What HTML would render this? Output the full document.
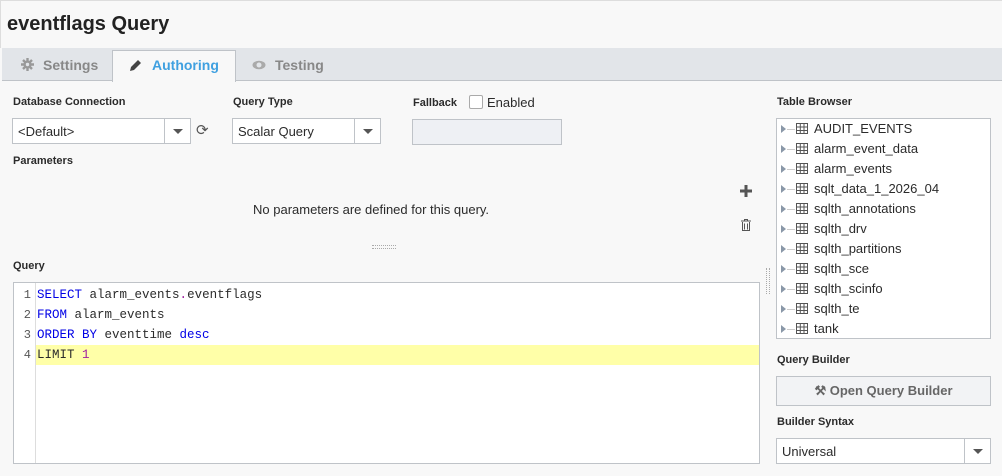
<!DOCTYPE html><html><head><style>
*{box-sizing:border-box;margin:0;padding:0}
body{width:1002px;height:476px;background:#f8f8f8;font-family:"Liberation Sans",sans-serif;color:#2b2b2b;position:relative;overflow:hidden;font-size:13px}
.a{position:absolute}
.lbl{position:absolute;font-size:11px;font-weight:bold;color:#2b2b2b}
.box{position:absolute;background:#fff;border:1px solid #bfc3c8}
.dd{position:absolute;width:26px;top:0;bottom:0;right:0;border-left:1px solid #bfc3c8}
.dd:after{content:"";position:absolute;left:8px;top:10px;border-left:5px solid transparent;border-right:5px solid transparent;border-top:5px solid #555}
.row{position:absolute;left:0;height:20px;font-size:13px;line-height:20px}
.row .tri{position:absolute;left:4px;top:6px;border-top:4px solid transparent;border-bottom:4px solid transparent;border-left:5px solid #8a98a8}
.row .ln{position:absolute;left:10px;top:10px;width:8px;border-top:1px solid #ccc}
.row svg{position:absolute;left:19px;top:4px}
.row span{position:absolute;left:37px}
.code{position:absolute;left:23px;font-family:"Liberation Mono",monospace;font-size:12.5px;height:20px;line-height:20px;white-space:pre}
.num{position:absolute;left:0;width:17px;text-align:right;font-family:"Liberation Mono",monospace;font-size:12px;color:#555;line-height:20px}
.k{color:#0000e6}
.tab{position:absolute;top:57px;font-size:14px;font-weight:bold}
</style></head><body>
<div class="a" style="left:0;top:0;width:1002px;height:48px;background:#f8f8f8;border-left:1px solid #ddd;border-top:1px solid #ddd"></div>
<div class="a" style="left:7px;top:13px;font-size:20px;font-weight:bold;color:#222">eventflags Query</div>
<div class="a" style="left:2px;top:48px;width:1000px;height:33px;background:#e2e5e9;border-bottom:1px solid #bfc3c8"></div>
<svg class="a" style="left:21px;top:58px" width="13" height="13" viewBox="0 0 13 13"><g stroke="#999" stroke-width="2.4"><path d="M6.5 0v13M0 6.5h13M2 2l9 9M11 2l-9 9"/></g><circle cx="6.5" cy="6.5" r="4" fill="#999"/><circle cx="6.5" cy="6.5" r="1.7" fill="#e2e5e9"/></svg>
<div class="tab" style="left:43px;color:#888">Settings</div>
<div class="a" style="left:112px;top:50px;width:124px;height:32px;background:#f8f8f8;border:1px solid #bfc3c8;border-bottom:none"></div>
<svg class="a" style="left:129px;top:58px" width="14" height="14" viewBox="0 0 14 14"><path d="M1 13l1-4 7-7 3 3-7 7z" fill="#444"/></svg>
<div class="tab" style="left:152px;color:#3fa0e0">Authoring</div>
<svg class="a" style="left:252px;top:60px" width="14" height="10" viewBox="0 0 14 10"><ellipse cx="7" cy="5" rx="6.5" ry="4.3" fill="#aaa"/><circle cx="7" cy="5" r="2.5" fill="#e2e5e9"/></svg>
<div class="tab" style="left:275px;color:#888">Testing</div>

<div class="lbl" style="left:13px;top:96px">Database Connection</div>
<div class="box" style="left:12px;top:118px;width:179px;height:26px"><span class="a" style="left:5px;top:5px">&lt;Default&gt;</span><div class="dd"></div></div>
<div class="a" style="left:196px;top:121px;font-size:15px;color:#555">⟳</div>
<div class="lbl" style="left:233px;top:96px">Query Type</div>
<div class="box" style="left:232px;top:118px;width:149px;height:26px"><span class="a" style="left:5px;top:5px">Scalar Query</span><div class="dd"></div></div>
<div class="lbl" style="left:413px;top:97px">Fallback</div>
<div class="a" style="left:469px;top:95px;width:14px;height:14px;border:1px solid #aaa;border-radius:2px;background:#fff"></div>
<div class="a" style="left:487px;top:95px">Enabled</div>
<div class="a" style="left:412px;top:119px;width:150px;height:26px;background:#eef0f4;border:1px solid #bfc3c8"></div>
<div class="lbl" style="left:13px;top:155px">Parameters</div>
<div class="a" style="left:253px;top:202px">No parameters are defined for this query.</div>
<svg class="a" style="left:740px;top:185px" width="12" height="12"><path d="M6 0v12M0 6h12" stroke="#555" stroke-width="3"/></svg>
<svg class="a" style="left:741px;top:219px" width="10" height="12" viewBox="0 0 10 12"><path d="M0 2h10M3.5 2V.5h3V2M1.5 3v8.5h7V3M3.5 4.5v6M6.5 4.5v6" stroke="#555" fill="none"/></svg>
<div class="a" style="left:372px;top:245px;width:24px;height:4px;border-top:1px dotted #aaa;border-bottom:1px dotted #aaa"></div>
<div class="lbl" style="left:13px;top:260px">Query</div>
<div class="a" style="left:766px;top:268px;width:4px;height:26px;border-left:1px dotted #aaa;border-right:1px dotted #aaa"></div>

<div class="box" style="left:13px;top:282px;width:747px;height:182px;overflow:hidden">
<div class="a" style="left:21px;top:0;bottom:0;border-left:1px solid #ddd"></div>
<div class="a" style="left:22px;top:62px;width:730px;height:20px;background:#ffffa8"></div>
<div class="num" style="top:2px">1</div><div class="num" style="top:22px">2</div><div class="num" style="top:42px">3</div><div class="num" style="top:62px">4</div>
<div class="code" style="top:2px"><span class="k">SELECT</span> alarm_events<span style="color:#a020a0">.</span>eventflags</div>
<div class="code" style="top:22px"><span class="k">FROM</span> alarm_events</div>
<div class="code" style="top:42px"><span class="k">ORDER BY</span> eventtime <span class="k">desc</span></div>
<div class="code" style="top:62px">LIMIT <span style="color:#a020a0">1</span></div>
</div>

<div class="lbl" style="left:777px;top:96px">Table Browser</div>
<div class="box" style="left:776px;top:118px;width:215px;height:221px">
<div class="row" style="top:0"><i class="tri"></i><i class="ln"></i><svg width="12" height="11"><rect x=".5" y=".5" width="11" height="10" fill="none" stroke="#555"/><path d="M0 4h12M0 7.5h12M4.3 0v11M8 0v11" stroke="#555"/></svg><span>AUDIT_EVENTS</span></div>
<div class="row" style="top:20px"><i class="tri"></i><i class="ln"></i><svg width="12" height="11"><rect x=".5" y=".5" width="11" height="10" fill="none" stroke="#555"/><path d="M0 4h12M0 7.5h12M4.3 0v11M8 0v11" stroke="#555"/></svg><span>alarm_event_data</span></div>
<div class="row" style="top:40px"><i class="tri"></i><i class="ln"></i><svg width="12" height="11"><rect x=".5" y=".5" width="11" height="10" fill="none" stroke="#555"/><path d="M0 4h12M0 7.5h12M4.3 0v11M8 0v11" stroke="#555"/></svg><span>alarm_events</span></div>
<div class="row" style="top:60px"><i class="tri"></i><i class="ln"></i><svg width="12" height="11"><rect x=".5" y=".5" width="11" height="10" fill="none" stroke="#555"/><path d="M0 4h12M0 7.5h12M4.3 0v11M8 0v11" stroke="#555"/></svg><span>sqlt_data_1_2026_04</span></div>
<div class="row" style="top:80px"><i class="tri"></i><i class="ln"></i><svg width="12" height="11"><rect x=".5" y=".5" width="11" height="10" fill="none" stroke="#555"/><path d="M0 4h12M0 7.5h12M4.3 0v11M8 0v11" stroke="#555"/></svg><span>sqlth_annotations</span></div>
<div class="row" style="top:100px"><i class="tri"></i><i class="ln"></i><svg width="12" height="11"><rect x=".5" y=".5" width="11" height="10" fill="none" stroke="#555"/><path d="M0 4h12M0 7.5h12M4.3 0v11M8 0v11" stroke="#555"/></svg><span>sqlth_drv</span></div>
<div class="row" style="top:120px"><i class="tri"></i><i class="ln"></i><svg width="12" height="11"><rect x=".5" y=".5" width="11" height="10" fill="none" stroke="#555"/><path d="M0 4h12M0 7.5h12M4.3 0v11M8 0v11" stroke="#555"/></svg><span>sqlth_partitions</span></div>
<div class="row" style="top:140px"><i class="tri"></i><i class="ln"></i><svg width="12" height="11"><rect x=".5" y=".5" width="11" height="10" fill="none" stroke="#555"/><path d="M0 4h12M0 7.5h12M4.3 0v11M8 0v11" stroke="#555"/></svg><span>sqlth_sce</span></div>
<div class="row" style="top:160px"><i class="tri"></i><i class="ln"></i><svg width="12" height="11"><rect x=".5" y=".5" width="11" height="10" fill="none" stroke="#555"/><path d="M0 4h12M0 7.5h12M4.3 0v11M8 0v11" stroke="#555"/></svg><span>sqlth_scinfo</span></div>
<div class="row" style="top:180px"><i class="tri"></i><i class="ln"></i><svg width="12" height="11"><rect x=".5" y=".5" width="11" height="10" fill="none" stroke="#555"/><path d="M0 4h12M0 7.5h12M4.3 0v11M8 0v11" stroke="#555"/></svg><span>sqlth_te</span></div>
<div class="row" style="top:200px"><i class="tri"></i><i class="ln"></i><svg width="12" height="11"><rect x=".5" y=".5" width="11" height="10" fill="none" stroke="#555"/><path d="M0 4h12M0 7.5h12M4.3 0v11M8 0v11" stroke="#555"/></svg><span>tank</span></div>
</div>
<div class="lbl" style="left:777px;top:354px">Query Builder</div>
<div class="a" style="left:776px;top:376px;width:215px;height:30px;background:#f2f3f5;border:1px solid #bfc3c8;text-align:center;line-height:28px;font-weight:bold;color:#666;font-size:13px">⚒ Open Query Builder</div>
<div class="lbl" style="left:777px;top:416px">Builder Syntax</div>
<div class="box" style="left:776px;top:438px;width:215px;height:26px"><span class="a" style="left:5px;top:5px">Universal</span><div class="dd"></div></div>
</body></html>
